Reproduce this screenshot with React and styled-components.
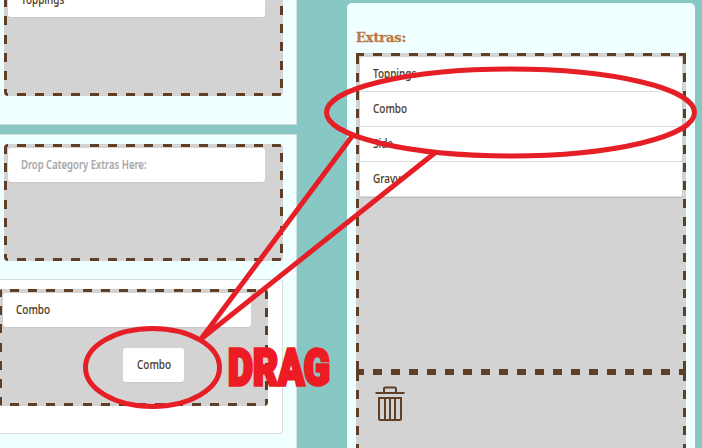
import React from 'react';
import styled, { createGlobalStyle } from 'styled-components';

const Global = createGlobalStyle`
  * { box-sizing: border-box; }
  body { margin: 0; background: #87c8c5; overflow: hidden; font-family: "Noto Sans", "Open Sans", sans-serif; color: #4f3c29; }
`;
const Page = styled.main`
  position: relative; width: 702px; height: 448px; overflow: hidden;
  display: grid; grid-template-columns: 297px 348px; column-gap: 50px;
`;
const Column = styled.div`
  display: flex; flex-direction: column; gap: 9px; min-width: 0; height: 448px; overflow: hidden;
`;
const Card = styled.section`
  flex: none; height: ${p => p.$h}px; background: #f0ffff;
  border: solid #d3dfdf; border-width: ${p => (p.$first ? '0 1px 1px 0' : '1px 1px 0 0')};
  padding: ${p => (p.$first ? '0 13px 28px 4px' : '9px 13px 0 4px')};
  display: flex; flex-direction: column; align-items: flex-start;
  justify-content: ${p => (p.$first ? 'flex-end' : 'flex-start')};
`;
const dash = (dir, period) => `repeating-linear-gradient(${dir}, #5f4026 0 9px, transparent 9px ${period}px)`;
const DropZone = styled.div`
  flex: none; width: ${p => p.$w}px; height: ${p => p.$h}px;
  padding: ${p => p.$pad || '4px 18px 4px 4px'}; border-radius: ${p => p.$r ?? 4}px;
  background-color: #d3d3d3;
  background-image: ${p => {
    const n = p.$period;
    return [dash('90deg', n), dash('90deg', n), dash('180deg', n), dash('180deg', n)].join(',');
  }};
  background-repeat: no-repeat;
  background-size: calc(100% + 40px) 3px, calc(100% + 40px) 3px, 3px calc(100% + 40px), 3px calc(100% + 40px);
  background-position: ${p => `${p.$t}px 0, ${p.$b}px 100%, 0 ${p.$l}px, 100% ${p.$rt}px`};
`;
const Nested = styled.div`
  flex: none; width: 283px; height: 155px; margin: 18px 0 0 -4px; padding: 9px 0 0; background: #fff;
  border: solid #d5dddd; border-width: 1px 1px 1px 0; border-radius: 0 4px 4px 0;
`;
const NestedZone = styled(DropZone)`margin-left: -1px;`;
const Item = styled.div`
  height: ${p => p.$h || 34}px; padding-left: 13px; display: flex; align-items: center;
  background: #fff; border-radius: ${p => (p.$flat ? 0 : 3)}px;
  border-bottom: ${p => (p.$flat ? '1px solid #ddd' : '0')};
  box-shadow: ${p => (p.$flat ? 'none' : '0 1px 1px #c9c9c9')};
`;
const Label = styled.span`
  display: inline-block; white-space: nowrap; transform-origin: 0 50%; transform: scaleX(${p => (p.$muted ? 0.79 : 0.83)});
  font-size: 12px; font-weight: ${p => (p.$muted ? 600 : 500)}; line-height: 16px; color: ${p => (p.$muted ? '#a9a9a9' : '#4f3c29')};
  -webkit-text-stroke: .1px currentColor;
`;
const Panel = styled.aside`
  margin-top: 3px; height: 450px; padding: 24px 9px 0; background: #f0ffff; border-radius: 5px 5px 0 0;
  display: flex; flex-direction: column;
`;
const Heading = styled.h2`
  flex: none; margin: 0; height: 26px; font: bold 13.5px/20px "DejaVu Serif", serif; color: #bd7748;
  transform-origin: 0 0; transform: scaleX(.97); white-space: nowrap; letter-spacing: -.2px;
  -webkit-text-stroke: .3px #bd7748;
`;
const List = styled.div`border-radius: 3px; overflow: hidden; box-shadow: 0 1px 1px #bbb;`;
const Trash = styled.svg`display: block; width: 30px; height: 36px;`;
const Dragged = styled(Item)`
  position: absolute; left: 123px; top: 348px; width: 61px; padding-left: 14px;
`;
const Annotation = styled.svg`position: absolute; inset: 0; width: 702px; height: 448px;`;
const DragText = styled.strong`
  position: absolute; left: 227.5px; top: 338px; font: 900 50px/60px Roboto, sans-serif; color: #ed1c24;
  -webkit-text-stroke: 3.5px #ed1c24; transform-origin: 0 50%; transform: scaleX(.77);
`;
const small = { $w: 279, $h: 117, $period: 18.24, $t: -5.5, $b: -5.5, $l: 0.5, $rt: -9.7 };

export default function App() {
  return (
    <Page>
      <Global />
      <Column>
        <Card $first $h={125}>
          <DropZone {...small}><Item><Label>Toppings</Label></Item></DropZone>
        </Card>
        <Card $h={330}>
          <DropZone {...small}><Item><Label $muted>Drop Category Extras Here:</Label></Item></DropZone>
          <Nested>
            <NestedZone {...small} $w={269} $t={-7.7} $b={-7.7} $l={-1.2} $rt={0.5} $pad="4px 17px 4px 4px">
              <Item><Label>Combo</Label></Item>
            </NestedZone>
          </Nested>
        </Card>
      </Column>
      <Panel>
        <Heading>Extras:</Heading>
        <DropZone $w={330} $h={319} $period={18} $t={-1} $b={-1} $l={2} $rt={2} $r={0} $pad="4px">
          <List>
            {['Toppings', 'Combo', 'Side', 'Gravy'].map(t => <Item key={t} $flat $h={35}><Label>{t}</Label></Item>)}
          </List>
        </DropZone>
        <DropZone $w={330} $h={100} $period={18} $t={-1} $b={-1} $l={0} $rt={0} $r={0} $pad="13px 19px">
          <Trash viewBox="0 0 30 36" fill="none" stroke="#5f4026" strokeWidth="2">
            <path d="M.5 8H29.5M9 7V3.5Q9 2.5 10.5 2.5H19.5Q21 2.5 21 3.5V7M4 13H26V33.5Q26 35 24.5 35H5.5Q4 35 4 33.5ZM10 13V35M15 13V35M20 13V35" />
          </Trash>
        </DropZone>
      </Panel>
      <Dragged><Label>Combo</Label></Dragged>
      <Annotation fill="none" stroke="#e61e26" strokeWidth="5">
        <ellipse cx="510.5" cy="112.5" rx="184" ry="43.5" />
        <ellipse cx="152.5" cy="367.5" rx="67" ry="39" />
        <path d="M353 135L201 339L436 152" />
      </Annotation>
      <DragText>DRAG</DragText>
    </Page>
  );
}
